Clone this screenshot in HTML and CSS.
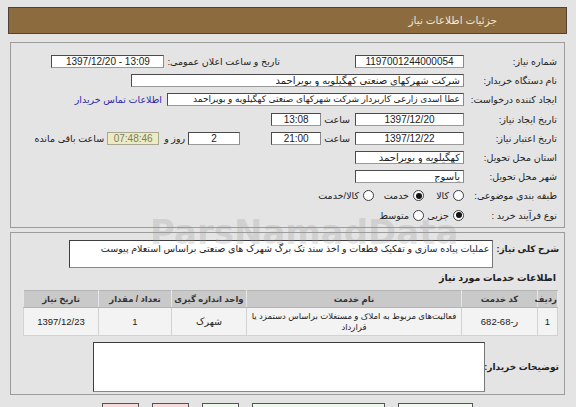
FILE: index.html
```html
<!DOCTYPE html>
<html lang="fa" dir="rtl">
<head>
<meta charset="utf-8">
<title>جزئیات اطلاعات نیاز</title>
<link rel="stylesheet" href="styles.css">
</head>
<body>
<div class="page">
  <div class="header">جزئیات اطلاعات نیاز</div>

  <div class="panel panel-top">
    <div class="row">
      <span class="lbl">شماره نیاز:</span>
      <span class="box w109 center">1197001244000054</span>
      <span class="lbl2 gap75">تاریخ و ساعت اعلان عمومی:</span>
      <span class="box w113 center ltr gap3">1397/12/20 - 13:09</span>
    </div>
    <div class="row">
      <span class="lbl">نام دستگاه خریدار:</span>
      <span class="box w333">شرکت شهرکهای صنعتی کهگیلویه و بویراحمد</span>
    </div>
    <div class="row">
      <span class="lbl">ایجاد کننده درخواست:</span>
      <span class="box w297 small">عطا اسدی زارعی کاربردار شرکت شهرکهای صنعتی کهگیلویه و بویراحمد</span>
      <a class="link" href="#">اطلاعات تماس خریدار</a>
    </div>
    <div class="row">
      <span class="lbl">تاریخ ایجاد نیاز:</span>
      <span class="box w109 center">1397/12/20</span>
      <span class="txt gap5">ساعت</span>
      <span class="box w50 center gap3">13:08</span>
    </div>
    <div class="row">
      <span class="lbl">تاریخ اعتبار نیاز:</span>
      <span class="box w109 center">1397/12/22</span>
      <span class="txt gap5">ساعت</span>
      <span class="box w50 center gap3">21:00</span>
      <span class="box w52 center gap31">2</span>
      <span class="txt gap3">روز و</span>
      <span class="box w52 center gap5 countdown">07:48:46</span>
      <span class="txt gap3">ساعت باقی مانده</span>
    </div>
    <div class="row">
      <span class="lbl">استان محل تحویل:</span>
      <span class="box w109">کهگیلویه و بویراحمد</span>
    </div>
    <div class="row">
      <span class="lbl">شهر محل تحویل:</span>
      <span class="box w109">یاسوج</span>
    </div>
    <div class="row">
      <span class="lbl">طبقه بندی موضوعی:</span>
      <span class="opt o40"><span class="radio"></span>کالا</span>
      <span class="opt o50"><span class="radio on"></span>خدمت</span>
      <span class="opt"><span class="radio"></span>کالا/خدمت</span>
    </div>
    <div class="row">
      <span class="lbl">نوع فرآیند خرید :</span>
      <span class="opt o40"><span class="radio on"></span>جزیی</span>
      <span class="opt"><span class="radio"></span>متوسط</span>
    </div>
  </div>

  <div class="panel panel-bottom">
    <div class="desc-row">
      <span class="blbl">شرح کلی نیاز:</span>
      <div class="desc-box">عملیات پیاده سازی و تفکیک قطعات و اخذ سند تک برگ شهرک های صنعتی براساس استعلام پیوست</div>
    </div>
    <div class="heading">اطلاعات خدمات مورد نیاز</div>
    <table class="items">
      <thead>
        <tr>
          <th class="c1">ردیف</th>
          <th class="c2">کد خدمت</th>
          <th class="c3">نام خدمت</th>
          <th class="c4">واحد اندازه گیری</th>
          <th class="c5">تعداد / مقدار</th>
          <th class="c6">تاریخ نیاز</th>
        </tr>
      </thead>
      <tbody>
        <tr>
          <td>1</td>
          <td><bdo dir="ltr">682-68-&#1585;</bdo></td>
          <td class="name">فعالیت‌های مربوط به املاک و مستغلات براساس دستمزد یا قرارداد</td>
          <td>شهرک</td>
          <td>1</td>
          <td>1397/12/23</td>
        </tr>
      </tbody>
    </table>
    <div class="notes-row">
      <span class="blbl nlbl">توضیحات خریدار:</span>
      <div class="notes-box"></div>
    </div>
  </div>

  <div class="buttons">
    <span class="btn b-w"></span>
    <span class="btn b-g2"></span>
    <span class="btn b-g"></span>
    <span class="btn b-p"></span>
    <span class="btn b-p"></span>
  </div>

  <div class="wm">ParsNamadData</div>
</div>
</body>
</html>
```

FILE: styles.css
```css
* { box-sizing: border-box; }
html, body { margin: 0; padding: 0; }
body {
  background: #e4e4e4;
  font-family: "Liberation Sans", "DejaVu Sans", sans-serif;
  font-size: 10px;
  color: #222;
  width: 576px;
  height: 407px;
  overflow: hidden;
}
.page { position: relative; padding-top: 7px; }

.header {
  margin: 0 9px 0 8px;
  height: 27px;
  background: #8c6b3f;
  border: 1px solid #4f4336;
  color: #f1e7d4;
  font-size: 10.5px;
  line-height: 25px;
  padding-right: 69px;
}

.panel {
  margin: 0 11px 0 10px;
  border: 1px solid #9c9c9c;
}
.panel-top {
  margin-top: 8px;
  height: 186px;
  padding: 9px 7px 0 0;
}
.row {
  display: flex;
  align-items: center;
  height: 19.2px;
}
.lbl { width: 93px; flex: none; font-size: 9.5px; color: #222; white-space: nowrap; }
.lbl2, .txt { font-size: 9.5px; white-space: nowrap; flex: none; }
.box {
  flex: none;
  height: 13px;
  line-height: 11px;
  background: #fff;
  border: 1px solid #4a4a4a;
  border-right-color: #8a8a8a;
  border-bottom-color: #9a9a9a;
  padding: 0 3px;
  font-size: 10px;
  white-space: nowrap;
  overflow: hidden;
  color: #222;
}
.box.small { font-size: 9px; }
.center { text-align: center; }
.ltr { direction: ltr; }
.w109 { width: 109px; }
.w113 { width: 113px; }
.w333 { width: 333px; }
.w297 { width: 297px; }
.w50 { width: 50px; }
.w52 { width: 52px; }
.gap3 { margin-right: 3px; }
.gap5 { margin-right: 5px; }
.gap31 { margin-right: 31px; }
.gap75 { margin-right: 75px; }
.countdown {
  background: #ecebc4;
  color: #7d7d66;
  border-color: #a8a890;
}
.link {
  margin-right: 5px;
  color: #2b2ba8;
  text-decoration: none;
  font-size: 9.5px;
  white-space: nowrap;
}

.opt {
  display: flex;
  align-items: center;
  gap: 4px;
  font-size: 9.5px;
  flex: none;
  white-space: nowrap;
}
.o40 { width: 40px; }
.o50 { width: 50px; }
.radio {
  width: 11px;
  height: 11px;
  border-radius: 50%;
  border: 1px solid #3e3e3e;
  background: #fff;
  position: relative;
  flex: none;
}
.radio.on::after {
  content: "";
  position: absolute;
  left: 1.5px;
  top: 1.5px;
  width: 6px;
  height: 6px;
  border-radius: 50%;
  background: #111;
}

.panel-bottom {
  margin-top: 4px;
  height: 163px;
  padding: 7px 5px 0 8px;
}
.desc-row { display: flex; align-items: flex-start; }
.blbl {
  flex: none;
  font-weight: bold;
  font-size: 9px;
  padding-top: 4px;
  margin-left: 3px;
  white-space: nowrap;
}
.desc-box {
  width: 424px;
  height: 28px;
  background: #fff;
  border: 1px solid #3e3e3e;
  border-right-color: #777;
  border-bottom-color: #888;
  padding: 1px 3px;
  font-size: 9.5px;
  line-height: 13px;
  white-space: nowrap;
  overflow: hidden;
}
.heading {
  font-weight: bold;
  font-size: 9.5px;
  margin-top: 3px;
  padding-right: 3px;
  height: 14px;
  line-height: 14px;
}
.items {
  margin-top: 5px;
  margin-right: 1px;
  width: 534px;
  border-collapse: collapse;
  border: 1px solid #b4b4b4;
  table-layout: fixed;
  font-size: 9.5px;
}
.items th {
  background: #c9c9c9;
  height: 17px;
  font-size: 8.5px;
  font-weight: bold;
  color: #333;
  border: 1px solid #e6e6e6;
  border-top-color: #b4b4b4;
  border-bottom-color: #b4b4b4;
  padding: 0;
}
.items td {
  background: #f3f3f3;
  height: 28px;
  text-align: center;
  border: 1px solid #d2d2d2;
  padding: 0 4px;
  line-height: 11px;
  color: #222;
}
.items td.name { font-size: 8.5px; padding: 0 2px; }
.c1 { width: 20px; }
.c2 { width: 76px; }
.c3 { width: 215px; }
.c4 { width: 75px; }
.c5 { width: 73px; }
.c6 { width: 75px; }

.notes-row {
  display: flex;
  align-items: center;
  margin-top: 6px;
}
.nlbl { width: 74px; padding-top: 0; margin-left: 0; }
.notes-box {
  width: 392px;
  height: 50px;
  background: #fff;
  border: 1px solid #3e3e3e;
  border-right-color: #777;
  border-bottom-color: #888;
}

.buttons {
  display: flex;
  margin-top: 8px;
  padding-right: 103px;
  gap: 13px;
}
.btn {
  height: 20px;
  border: 1px solid #555;
  flex: none;
}
.b-w { width: 75px; background: #f4fbf2; }
.b-g2 { width: 133px; background: #eef9ec; }
.b-g { width: 37px; background: #eef9ec; }
.b-p { width: 37px; background: #f8d9d9; }

.wm {
  position: absolute;
  left: 150px;
  top: 212px;
  pointer-events: none;
  white-space: nowrap;
  color: rgba(150, 150, 150, 0.25);
  font-size: 34px;
  font-weight: bold;
  font-family: "DejaVu Sans", sans-serif;
  direction: ltr;
}
```
